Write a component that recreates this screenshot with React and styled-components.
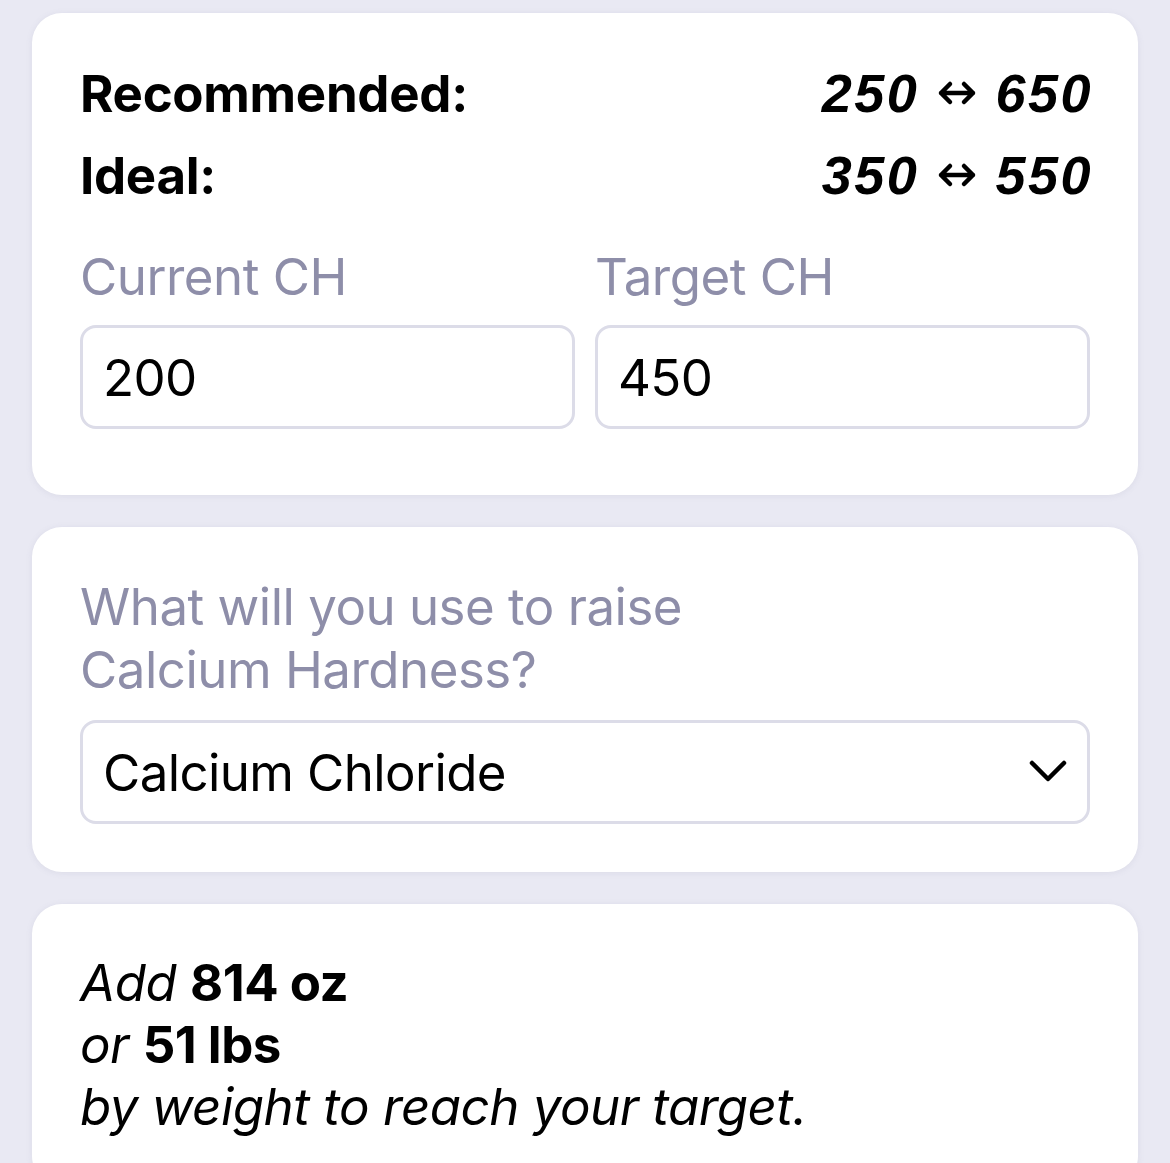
import React from 'react';
import styled, { createGlobalStyle } from 'styled-components';

const GlobalStyle = createGlobalStyle`
  html, body {
    margin: 0;
    padding: 0;
    background: #e9e9f3;
  }
  body {
    font-family: Inter, "Noto Sans", sans-serif;
    color: #000;
  }
`;

const Page = styled.div`
  display: flex;
  flex-direction: column;
  gap: 32px;
  padding: 13px 32px 0;
  height: 1163px;
  overflow: hidden;
  box-sizing: border-box;
`;

const Card = styled.div`
  background: #fff;
  border-radius: 30px;
  padding: 48px 48px ${(p) => p.$bottom || 48}px;
  box-shadow: 0 1px 6px rgba(120, 120, 160, 0.12);
  flex-shrink: 0;
`;

const RangeRow = styled.div`
  display: flex;
  justify-content: space-between;
  align-items: center;
  height: 64px;
  margin-bottom: ${(p) => p.$gap || 0}px;
`;

const RangeLabel = styled.span`
  font-size: 51px;
  font-weight: 700;
  letter-spacing: -0.3px;
`;

const RangeValue = styled.span`
  display: flex;
  align-items: center;
  gap: 18px;
  margin-right: -3px;
  font-family: "Liberation Sans", Arial, sans-serif;
  font-style: italic;
  font-weight: 700;
  font-size: 54px;
  letter-spacing: 2.5px;
`;

function Arrow() {
  return (
    <svg width="40" height="26" viewBox="0 0 40 26" fill="none">
      <path
        d="M4 13 H36 M13 4 L4 13 L13 22 M27 4 L36 13 L27 22"
        stroke="#000"
        strokeWidth="4.5"
        strokeLinecap="round"
        strokeLinejoin="round"
      />
    </svg>
  );
}

const Fields = styled.div`
  display: grid;
  grid-template-columns: 1fr 1fr;
  gap: 20px;
  margin-top: 38px;
`;

const Field = styled.div`
  display: flex;
  flex-direction: column;
  gap: 17px;
`;

const Label = styled.div`
  font-size: 51px;
  line-height: 63px;
  letter-spacing: -0.5px;
  color: #8e8ea9;
`;

const Input = styled.div`
  height: 104px;
  box-sizing: border-box;
  border: 3px solid #dcdce8;
  border-radius: 16px;
  padding: 0 20px;
  display: flex;
  align-items: center;
  justify-content: space-between;
  font-size: 51px;
  letter-spacing: -0.6px;
`;

const SelectBox = styled(Input)`
  margin-top: 19px;
  padding-right: 20px;
`;

const Result = styled.div`
  font-size: 51px;
  line-height: 62px;
  letter-spacing: -0.5px;
  em {
    font-style: italic;
  }
  b {
    font-weight: 700;
  }
`;

function Chevron() {
  return (
    <svg width="38" height="24" viewBox="0 0 38 24" fill="none">
      <path d="M3 3 L19 19 L35 3" stroke="#000" strokeWidth="4.5" strokeLinecap="round" strokeLinejoin="round" />
    </svg>
  );
}

function Range({ from, to }) {
  return (
    <RangeValue>
      <span>{from}</span>
      <Arrow />
      <span>{to}</span>
    </RangeValue>
  );
}

export default function App() {
  return (
    <>
      <GlobalStyle />
      <Page>
        <Card $bottom={66}>
          <RangeRow $gap={18}>
            <RangeLabel>Recommended:</RangeLabel>
            <Range from="250" to="650" />
          </RangeRow>
          <RangeRow>
            <RangeLabel>Ideal:</RangeLabel>
            <Range from="350" to="550" />
          </RangeRow>
          <Fields>
            <Field>
              <Label>Current CH</Label>
              <Input>200</Input>
            </Field>
            <Field>
              <Label>Target CH</Label>
              <Input>450</Input>
            </Field>
          </Fields>
        </Card>
        <Card>
          <Label>What will you use to raise<br />Calcium Hardness?</Label>
          <SelectBox>
            <span>Calcium Chloride</span>
            <Chevron />
          </SelectBox>
        </Card>
        <Card>
          <Result>
            <em>Add</em> <b>814 oz</b><br />
            <em>or</em> <b>51 lbs</b><br />
            <em>by weight to reach your target.</em>
          </Result>
        </Card>
      </Page>
    </>
  );
}
